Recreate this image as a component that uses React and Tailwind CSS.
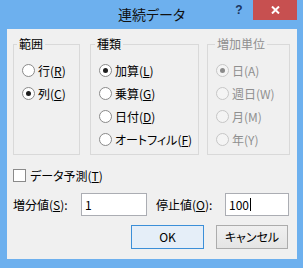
// 連続データ ダイアログ (Windows 8 風)
function Radio({ checked, disabled }) {
  return (
    <span
      className={`w-[13px] h-[13px] shrink-0 rounded-full border flex items-center justify-center ${
        disabled ? "border-[#c6c6c6] bg-[#f4f4f4]" : "border-[#8a8a8a] bg-white"
      }`}
    >
      {checked && (
        <span
          className={`w-[5px] h-[5px] rounded-full ${
            disabled ? "bg-[#8a8a8a]" : "bg-[#1e1e1e]"
          }`}
        />
      )}
    </span>
  );
}

function RadioRow({ checked, disabled, children }) {
  return (
    <div className="h-[23px] flex items-center gap-[3px]">
      <Radio checked={checked} disabled={disabled} />
      <span className={disabled ? "text-[#8f8f8f]" : ""}>{children}</span>
    </div>
  );
}

function Group({ label, width, legendOffset, disabled, children }) {
  return (
    <fieldset
      className={`${width} h-[118px] border border-[#d9d9d9] px-0 pb-0 m-0`}
    >
      <legend
        className={`${legendOffset} px-[2px] leading-[14px] ${
          disabled ? "text-[#8f8f8f]" : ""
        }`}
      >
        {label}
      </legend>
      <div className="pl-[8px] pt-[8px] flex flex-col">{children}</div>
    </fieldset>
  );
}

export default function App() {
  return (
    <div className="w-[303px] h-[268px] bg-[#6db0ee] flex flex-col [font-family:'Noto_Sans_CJK_JP',sans-serif] [font-feature-settings:'palt'] text-[12px] leading-[16px] text-black">
      {/* タイトルバー */}
      <div className="h-[29px] grid grid-cols-[1fr_auto_1fr]">
        <div />
        <div className="text-[14px] leading-[28px] text-[#111]">連続データ</div>
        <div className="flex justify-end items-start pr-[6px]">
          <div className="w-[28px] h-[20px] flex items-center justify-center text-[12px] font-bold text-[#1b3560] [font-family:'Liberation_Sans',sans-serif]">
            ?
          </div>
          <div className="w-[44px] h-[20px] bg-[#c75050] flex items-center justify-center">
            <svg width="9" height="8" viewBox="0 0 9 8">
              <path d="M1 0.5 L8 7.5 M8 0.5 L1 7.5" stroke="white" strokeWidth="2" />
            </svg>
          </div>
        </div>
      </div>

      {/* 本体 */}
      <div className="ml-[7px] mr-[6px] h-[230px] bg-[#f0f0f0] pl-[6px] pt-[8px]">
        <div className="flex items-start">
          <Group label="範囲" width="w-[67px]" legendOffset="ml-[3px]">
            <RadioRow>
              行(<u>R</u>)
            </RadioRow>
            <RadioRow checked>
              列(<u>C</u>)
            </RadioRow>
          </Group>
          <div className="ml-[10px]">
            <Group label="種類" width="w-[109px]" legendOffset="ml-[4px]">
              <RadioRow checked>
                加算(<u>L</u>)
              </RadioRow>
              <RadioRow>
                乗算(<u>G</u>)
              </RadioRow>
              <RadioRow>
                日付(<u>D</u>)
              </RadioRow>
              <RadioRow>
                オートフィル(<u>F</u>)
              </RadioRow>
            </Group>
          </div>
          <div className="ml-[8px]">
            <Group label="増加単位" width="w-[83px]" legendOffset="ml-[7px]" disabled>
              <RadioRow checked disabled>
                日(A)
              </RadioRow>
              <RadioRow disabled>週日(W)</RadioRow>
              <RadioRow disabled>月(M)</RadioRow>
              <RadioRow disabled>年(Y)</RadioRow>
            </Group>
          </div>
        </div>

        {/* データ予測 */}
        <div className="mt-[14px] h-[13px] flex items-center gap-[4px]">
          <span className="w-[13px] h-[13px] border border-[#8a8a8a] bg-white" />
          <span>
            データ予測(<u>T</u>)
          </span>
        </div>

        {/* 増分値・停止値 */}
        <div className="mt-[11px] h-[23px] flex items-center">
          <span className="w-[68px]">
            増分値(<u>S</u>):
          </span>
          <div className="w-[66px] h-[23px] bg-white border border-[#abadb3] pl-[3px] flex items-center">
            1
          </div>
          <span className="ml-[9px] w-[69px]">
            停止値(<u>O</u>):
          </span>
          <div className="w-[64px] h-[23px] bg-white border border-[#abadb3] pl-[3px] flex items-center">
            100
            <span className="ml-[1px] w-[1px] h-[13px] bg-black" />
          </div>
        </div>

        {/* ボタン */}
        <div className="mt-[9px] flex justify-end gap-[12px] pr-[9px]">
          <button className="w-[73px] h-[24px] border border-[#3c8fd8] bg-[#e5eef8] flex items-center justify-center">
            OK
          </button>
          <button className="w-[72px] h-[24px] border border-[#acacac] bg-gradient-to-b from-[#f0f0f0] to-[#e5e5e5] flex items-center justify-center">
            キャンセル
          </button>
        </div>
      </div>
    </div>
  );
}
